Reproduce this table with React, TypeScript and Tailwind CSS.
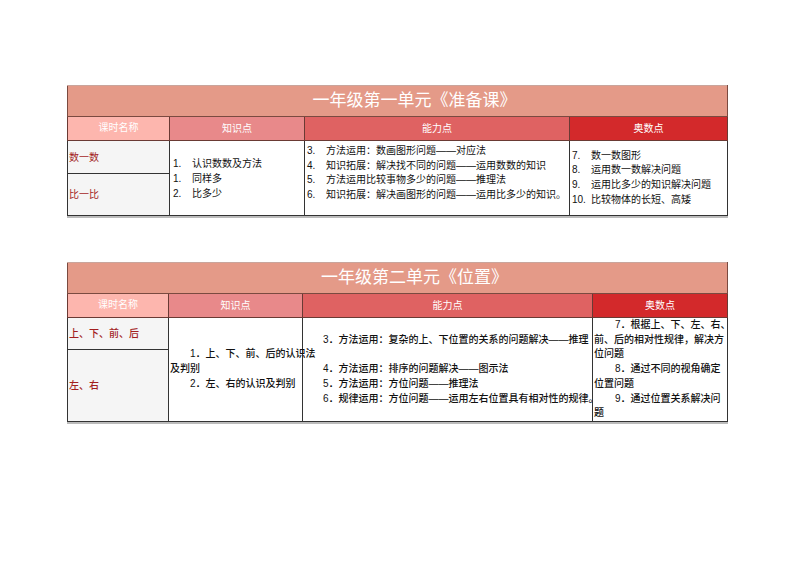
import type { ReactNode } from 'react'

const font = { fontFamily: '"Liberation Sans", "Noto Sans CJK SC", sans-serif' }

// numbered row with hanging number column
function Item({ n, children }: { n: string; children: ReactNode }) {
  return (
    <div className="flex whitespace-nowrap">
      <span className="w-[19px] shrink-0">{n}</span>
      <span>{children}</span>
    </div>
  )
}

function Title({ text }: { text: string }) {
  return (
    <tr className="h-[31px]">
      <td
        colSpan={4}
        className="bg-[#e49a88] border border-[#7a4a40] border-t-[#c9a59c] text-center text-white text-[17px] pl-[34px]"
      >
        {text}
      </td>
    </tr>
  )
}

function Header() {
  return (
    <tr className="h-[24px] text-[10px] text-white">
      <td className="bg-[#fdb6ae] border border-[#6a3a34] text-center pb-[3px]">课时名称</td>
      <td className="bg-[#e8898a] border border-[#6a3a34] text-center">知识点</td>
      <td className="bg-[#df6262] border border-[#6a3a34] text-center">能力点</td>
      <td className="bg-[#d3292b] border border-[#6a3a34] text-center">奥数点</td>
    </tr>
  )
}

function UnitOne() {
  return (
    <table className="table-fixed border-collapse w-[660px] shadow-[0_2px_0_#bbb]">
      <colgroup>
        <col className="w-[102px]" />
        <col className="w-[135px]" />
        <col className="w-[265px]" />
        <col className="w-[158px]" />
      </colgroup>
      <tbody>
        <Title text="一年级第一单元《准备课》" />
        <Header />
        <tr className="h-[33px] text-[10px] text-[#111]">
          <td className="bg-[#f5f5f5] border border-[#333] text-[#a31f1f] pl-[1px]">数一数</td>
          <td rowSpan={2} className="border border-[#333] align-middle pl-[3px] leading-[15px]">
            <Item n="1.">认识数数及方法</Item>
            <Item n="1.">同样多</Item>
            <Item n="2.">比多少</Item>
          </td>
          <td rowSpan={2} className="border border-[#333] align-top pl-[2px] pt-[3px] leading-[14.5px]">
            <Item n="3.">方法运用：数画图形问题——对应法</Item>
            <Item n="4.">知识拓展：解决找不同的问题——运用数数的知识</Item>
            <Item n="5.">方法运用比较事物多少的问题——推理法</Item>
            <Item n="6.">知识拓展：解决画图形的问题——运用比多少的知识。</Item>
          </td>
          <td rowSpan={2} className="border border-[#333] align-middle pl-[2px] leading-[14.7px]">
            <Item n="7.">数一数图形</Item>
            <Item n="8.">运用数一数解决问题</Item>
            <Item n="9.">运用比多少的知识解决问题</Item>
            <Item n="10.">比较物体的长短、高矮</Item>
          </td>
        </tr>
        <tr className="h-[42px] text-[10px]">
          <td className="bg-[#f5f5f5] border border-[#333] text-[#a31f1f] pl-[1px]">比一比</td>
        </tr>
      </tbody>
    </table>
  )
}

function UnitTwo() {
  return (
    <table className="table-fixed border-collapse w-[660px] shadow-[0_2px_0_#bbb]">
      <colgroup>
        <col className="w-[101px]" />
        <col className="w-[134px]" />
        <col className="w-[290px]" />
        <col className="w-[135px]" />
      </colgroup>
      <tbody>
        <Title text="一年级第二单元《位置》" />
        <Header />
        <tr className="h-[32px] text-[10px] text-[#111] font-medium">
          <td className="bg-[#f5f5f5] border border-[#333] text-[#a31f1f] pl-[1px]">上、下、前、后</td>
          <td rowSpan={2} className="border border-[#333] align-middle pl-[1px] leading-[14.7px] whitespace-nowrap">
            <div className="pl-[20px]">1．上、下、前、后的认识法</div>
            <div>及判别</div>
            <div className="pl-[20px]">2．左、右的认识及判别</div>
          </td>
          <td rowSpan={2} className="border border-[#333] align-middle pl-[20px] leading-[14.7px] whitespace-nowrap">
            <div>3．方法运用：复杂的上、下位置的关系的问题解决——推理</div>
            <div className="h-[14.7px]"></div>
            <div>4．方法运用：排序的问题解决——图示法</div>
            <div>5．方法运用：方位问题——推理法</div>
            <div>6．规律运用：方位问题——运用左右位置具有相对性的规律。</div>
          </td>
          <td rowSpan={2} className="border border-[#333] align-middle pl-[1px] leading-[14.7px] whitespace-nowrap">
            <div className="pl-[21px]">7．根据上、下、左、右、</div>
            <div>前、后的相对性规律，解决方</div>
            <div>位问题</div>
            <div className="pl-[21px]">8．通过不同的视角确定</div>
            <div>位置问题</div>
            <div className="pl-[21px]">9．通过位置关系解决问</div>
            <div>题</div>
          </td>
        </tr>
        <tr className="h-[72px] text-[10px] font-medium">
          <td className="bg-[#f5f5f5] border border-[#333] text-[#a31f1f] pl-[1px]">左、右</td>
        </tr>
      </tbody>
    </table>
  )
}

export default function App() {
  return (
    <div className="w-[794px] h-[561px] bg-white pt-[85px]" style={font}>
      <div className="w-[660px] mx-auto flex flex-col gap-[46px]">
        <UnitOne />
        <UnitTwo />
      </div>
    </div>
  )
}
